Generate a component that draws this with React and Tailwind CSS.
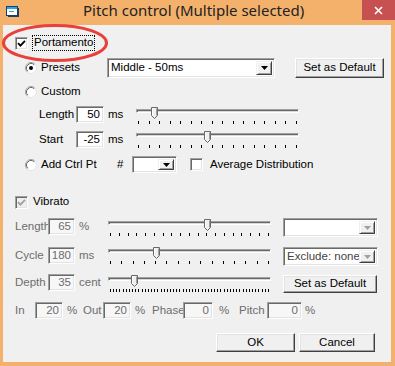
import React from 'react';

const thumbPos = (x) => ({ left: x });

function Radio({ checked }) {
  return (
    <svg width="12" height="12" viewBox="0 0 12 12" className="shrink-0">
      <circle cx="6" cy="6" r="5.5" fill="#fff" />
      <path d="M2.11 9.89A5.5 5.5 0 0 1 9.89 2.11" fill="none" stroke="#a0a0a0" />
      <path d="M9.89 2.11A5.5 5.5 0 0 1 2.11 9.89" fill="none" stroke="#e3e3e3" />
      <path d="M2.82 9.18A4.5 4.5 0 0 1 9.18 2.82" fill="none" stroke="#696969" />
      {checked && <circle cx="6" cy="6" r="2" fill="#000" />}
    </svg>
  );
}

function Check({ checked, disabled }) {
  return (
    <div
      className={`w-[13px] h-[13px] shrink-0 border border-t-[#a0a0a0] border-l-[#a0a0a0] border-r-white border-b-white shadow-[inset_1px_1px_0_#696969,inset_-1px_-1px_0_#e3e3e3] flex items-center justify-center ${
        disabled ? 'bg-[#f0f0f0]' : 'bg-white'
      }`}
    >
      {checked && (
        <svg width="9" height="9" viewBox="0 0 9 9">
          <path d="M1 4.2L3.4 6.6L8 1.8" fill="none" stroke={disabled ? '#a0a0a0' : '#000'} strokeWidth="1.8" />
        </svg>
      )}
    </div>
  );
}

function ArrowBtn({ disabled }) {
  return (
    <div className="w-[16px] h-full shrink-0 bg-[#f0f0f0] border border-t-[#f0f0f0] border-l-[#f0f0f0] border-r-[#404040] border-b-[#404040] shadow-[inset_1px_1px_0_#fff,inset_-1px_-1px_0_#a0a0a0] flex items-center justify-center">
      <svg width="7" height="4" viewBox="0 0 7 4">
        <path d="M0 0H7L3.5 4Z" fill={disabled ? '#a0a0a0' : '#000'} />
      </svg>
    </div>
  );
}

function Combo({ className, text, disabled }) {
  return (
    <div
      className={`${className} shrink-0 bg-white border border-t-[#a0a0a0] border-l-[#a0a0a0] border-r-white border-b-white shadow-[inset_1px_1px_0_#696969,inset_-1px_-1px_0_#e3e3e3] flex items-stretch p-[2px]`}
    >
      <div className={`flex-1 min-w-0 flex items-center pl-[1px] text-[11.5px] leading-none whitespace-nowrap ${disabled ? 'text-[#444]' : 'text-black'}`}>
        {text}
      </div>
      <ArrowBtn disabled={disabled} />
    </div>
  );
}

function Edit({ className, value, disabled }) {
  return (
    <div
      className={`${className} h-[17px] shrink-0 border border-t-[#a0a0a0] border-l-[#a0a0a0] border-r-white border-b-white shadow-[inset_1px_1px_0_#696969,inset_-1px_-1px_0_#e3e3e3] flex items-center justify-end pr-[3px] text-[11.5px] leading-none ${
        disabled ? 'bg-[#f7f7f7] text-[#6d6d6d]' : 'bg-white text-black'
      }`}
    >
      {value}
    </div>
  );
}

function Btn({ className, children }) {
  return (
    <div
      className={`${className} shrink-0 bg-[#f0f0f0] border border-t-white border-l-white border-r-[#404040] border-b-[#404040] shadow-[inset_-1px_-1px_0_#a0a0a0,inset_1px_1px_0_#e3e3e3] flex items-center justify-center text-[11.5px] leading-none text-black`}
    >
      {children}
    </div>
  );
}

function Thumb() {
  return (
    <svg width="7" height="12" viewBox="0 0 7 12">
      <path d="M0.5 0.5H6.5V8.5L3.5 11.5L0.5 8.5Z" fill="#f0f0f0" stroke="#696969" />
      <path d="M1.5 1.5V8.5" stroke="#fff" />
      <path d="M5.5 1.5V8.5" stroke="#a0a0a0" />
    </svg>
  );
}

function Slider({ className, thumb, ticks }) {
  return (
    <div className={`${className} relative w-[163px] shrink-0`}>
      <div className="h-[4px] border border-t-[#a0a0a0] border-l-[#a0a0a0] border-r-white border-b-white bg-[#d8d8d8] shadow-[inset_1px_1px_0_#696969]" />
      <div className="mt-[8px] flex justify-between px-[2px]">
        {Array.from({ length: ticks }).map((_, i) => (
          <div key={i} className="w-px h-[3px] bg-black" />
        ))}
      </div>
      <div className="absolute top-[-2px]" style={thumbPos(thumb)}>
        <Thumb />
      </div>
    </div>
  );
}

function Label({ className, children, grey }) {
  return (
    <div className={`${className} h-[17px] shrink-0 flex items-center text-[11.5px] leading-none whitespace-nowrap ${grey ? 'text-[#6d6d6d]' : 'text-black'}`}>
      {children}
    </div>
  );
}

export default function App() {
  return (
    <div className="relative w-[395px] h-[366px] bg-[#f3b16c] overflow-hidden font-['Liberation_Sans',Arial,sans-serif]">
      {/* title bar */}
      <div className="h-[25px] flex items-start">
        <svg width="13" height="12" viewBox="0 0 13 12" className="ml-[6px] mt-[6px] shrink-0">
          <rect x="0.5" y="0.5" width="11" height="9" fill="#fff" stroke="#1a3c6e" />
          <rect x="1" y="1" width="10" height="2" fill="#2aa8e0" />
          <rect x="12" y="2" width="1" height="9" fill="#1a3c6e" />
          <rect x="2" y="10" width="11" height="1" fill="#1a3c6e" />
          <rect x="3" y="5" width="5" height="1" fill="#2aa8e0" />
        </svg>
        <div className="ml-[64px] text-[15px] leading-[20px] text-[#222] whitespace-nowrap font-['Noto_Sans',sans-serif]">
          Pitch control (Multiple selected)
        </div>
        <div className="ml-auto w-[33px] h-[20px] bg-[#c75050] flex items-center justify-center">
          <svg width="9" height="9" viewBox="0 0 9 9">
            <path d="M1 1L8 8M8 1L1 8" stroke="#fff" strokeWidth="1.6" />
          </svg>
        </div>
      </div>

      {/* client area */}
      <div className="ml-[3px] w-[388px] h-[337px] bg-[#f0f0f0] flex flex-col">
        {/* Portamento */}
        <div className="mt-[10px] h-[16px] flex items-center">
          <div className="ml-[12px]"><Check checked /></div>
          <div className="ml-[4px] h-[16px] px-[1px] border border-dotted border-black flex items-center text-[11.5px] leading-none text-black">
            Portamento
          </div>
        </div>

        {/* Presets */}
        <div className="mt-[7px] h-[20px] flex items-center">
          <div className="ml-[22px]"><Radio checked /></div>
          <div className="ml-[4px] w-[66px] text-[11.5px] leading-none">Presets</div>
          <Combo className="w-[168px] h-[20px]" text="Middle - 50ms" />
          <Btn className="ml-[20px] w-[89px] h-[20px]">Set as Default</Btn>
        </div>

        {/* Custom */}
        <div className="mt-[7px] h-[14px] flex items-center">
          <div className="ml-[22px]"><Radio /></div>
          <div className="ml-[4px] text-[11.5px] leading-none">Custom</div>
        </div>

        {/* Length */}
        <div className="mt-[6px] h-[22px] flex items-start">
          <Label className="ml-[36px] w-[37px] mt-[1px]">Length</Label>
          <Edit className="w-[28px] mt-[1px]" value="50" />
          <Label className="w-[32px] pl-[4px] mt-[1px]">ms</Label>
          <Slider className="mt-[4px]" thumb={15} ticks={16} />
        </div>

        {/* Start */}
        <div className="mt-[3px] h-[22px] flex items-start">
          <Label className="ml-[36px] w-[37px] mt-[1px]">Start</Label>
          <Edit className="w-[28px] mt-[1px]" value="-25" />
          <Label className="w-[32px] pl-[4px] mt-[1px]">ms</Label>
          <Slider className="mt-[3px]" thumb={68} ticks={16} />
        </div>

        {/* Add Ctrl Pt */}
        <div className="mt-[4px] h-[17px] flex items-center">
          <div className="ml-[22px]"><Radio /></div>
          <div className="ml-[4px] w-[76px] text-[11.5px] leading-none">Add Ctrl Pt</div>
          <div className="w-[15px] text-[11.5px] leading-none">#</div>
          <Combo className="w-[45px] h-[17px]" text="" />
          <div className="ml-[13px]"><Check /></div>
          <div className="ml-[7px] text-[11.5px] leading-none">Average Distribution</div>
        </div>

        {/* Vibrato */}
        <div className="mt-[22px] h-[14px] flex items-center">
          <div className="ml-[12px]"><Check checked disabled /></div>
          <div className="ml-[5px] text-[11.5px] leading-none">Vibrato</div>
        </div>

        {/* Vibrato Length (label is clipped by its edit box, as in the original) */}
        <div className="mt-[9px] h-[22px] flex items-start">
          <Label grey className="ml-[12px] w-[33px] overflow-hidden">Length</Label>
          <Edit disabled className="w-[27px]" value="65" />
          <Label grey className="w-[33px] pl-[4px]">%</Label>
          <Slider className="mt-[3px]" thumb={96} ticks={19} />
          <Combo disabled className="ml-[12px] w-[95px] h-[19px]" text="" />
        </div>

        {/* Cycle */}
        <div className="mt-[7px] h-[22px] flex items-start">
          <Label grey className="ml-[12px] w-[33px]">Cycle</Label>
          <Edit disabled className="w-[27px]" value="180" />
          <Label grey className="w-[33px] pl-[4px]">ms</Label>
          <Slider className="mt-[2px]" thumb={45} ticks={15} />
          <Combo disabled className="ml-[12px] w-[95px] h-[19px]" text="Exclude: none" />
        </div>

        {/* Depth */}
        <div className="mt-[5px] h-[22px] flex items-start">
          <Label grey className="ml-[12px] w-[33px]">Depth</Label>
          <Edit disabled className="w-[27px]" value="35" />
          <Label grey className="w-[33px] pl-[4px]">cent</Label>
          <Slider className="mt-[3px]" thumb={23} ticks={51} />
          <Btn className="ml-[12px] mt-[1px] w-[94px] h-[18px]">Set as Default</Btn>
        </div>

        {/* In / Out / Phase / Pitch */}
        <div className="mt-[6px] h-[17px] flex items-start">
          <Label grey className="ml-[12px] w-[20px]">In</Label>
          <Edit disabled className="w-[28px]" value="20" />
          <Label grey className="w-[20px] pl-[4px]">%</Label>
          <Label grey className="w-[20px]">Out</Label>
          <Edit disabled className="w-[28px]" value="20" />
          <Label grey className="w-[21px] pl-[4px]">%</Label>
          <Label grey className="w-[31px]">Phase</Label>
          <Edit disabled className="w-[30px]" value="0" />
          <Label grey className="w-[26px] pl-[6px]">%</Label>
          <Label grey className="w-[28px]">Pitch</Label>
          <Edit disabled className="w-[35px]" value="0" />
          <Label grey className="pl-[3px]">%</Label>
        </div>

        {/* OK / Cancel */}
        <div className="mt-[14px] h-[19px] flex items-start">
          <Btn className="ml-[213px] w-[79px] h-[19px]">OK</Btn>
          <Btn className="ml-[4px] w-[76px] h-[19px]">Cancel</Btn>
        </div>
      </div>

      {/* red highlight ellipse */}
      <svg className="absolute left-0 top-0 pointer-events-none" width="395" height="366">
        <ellipse cx="55" cy="43" rx="51.5" ry="17.5" fill="none" stroke="#e8413b" strokeWidth="3" />
      </svg>
    </div>
  );
}
